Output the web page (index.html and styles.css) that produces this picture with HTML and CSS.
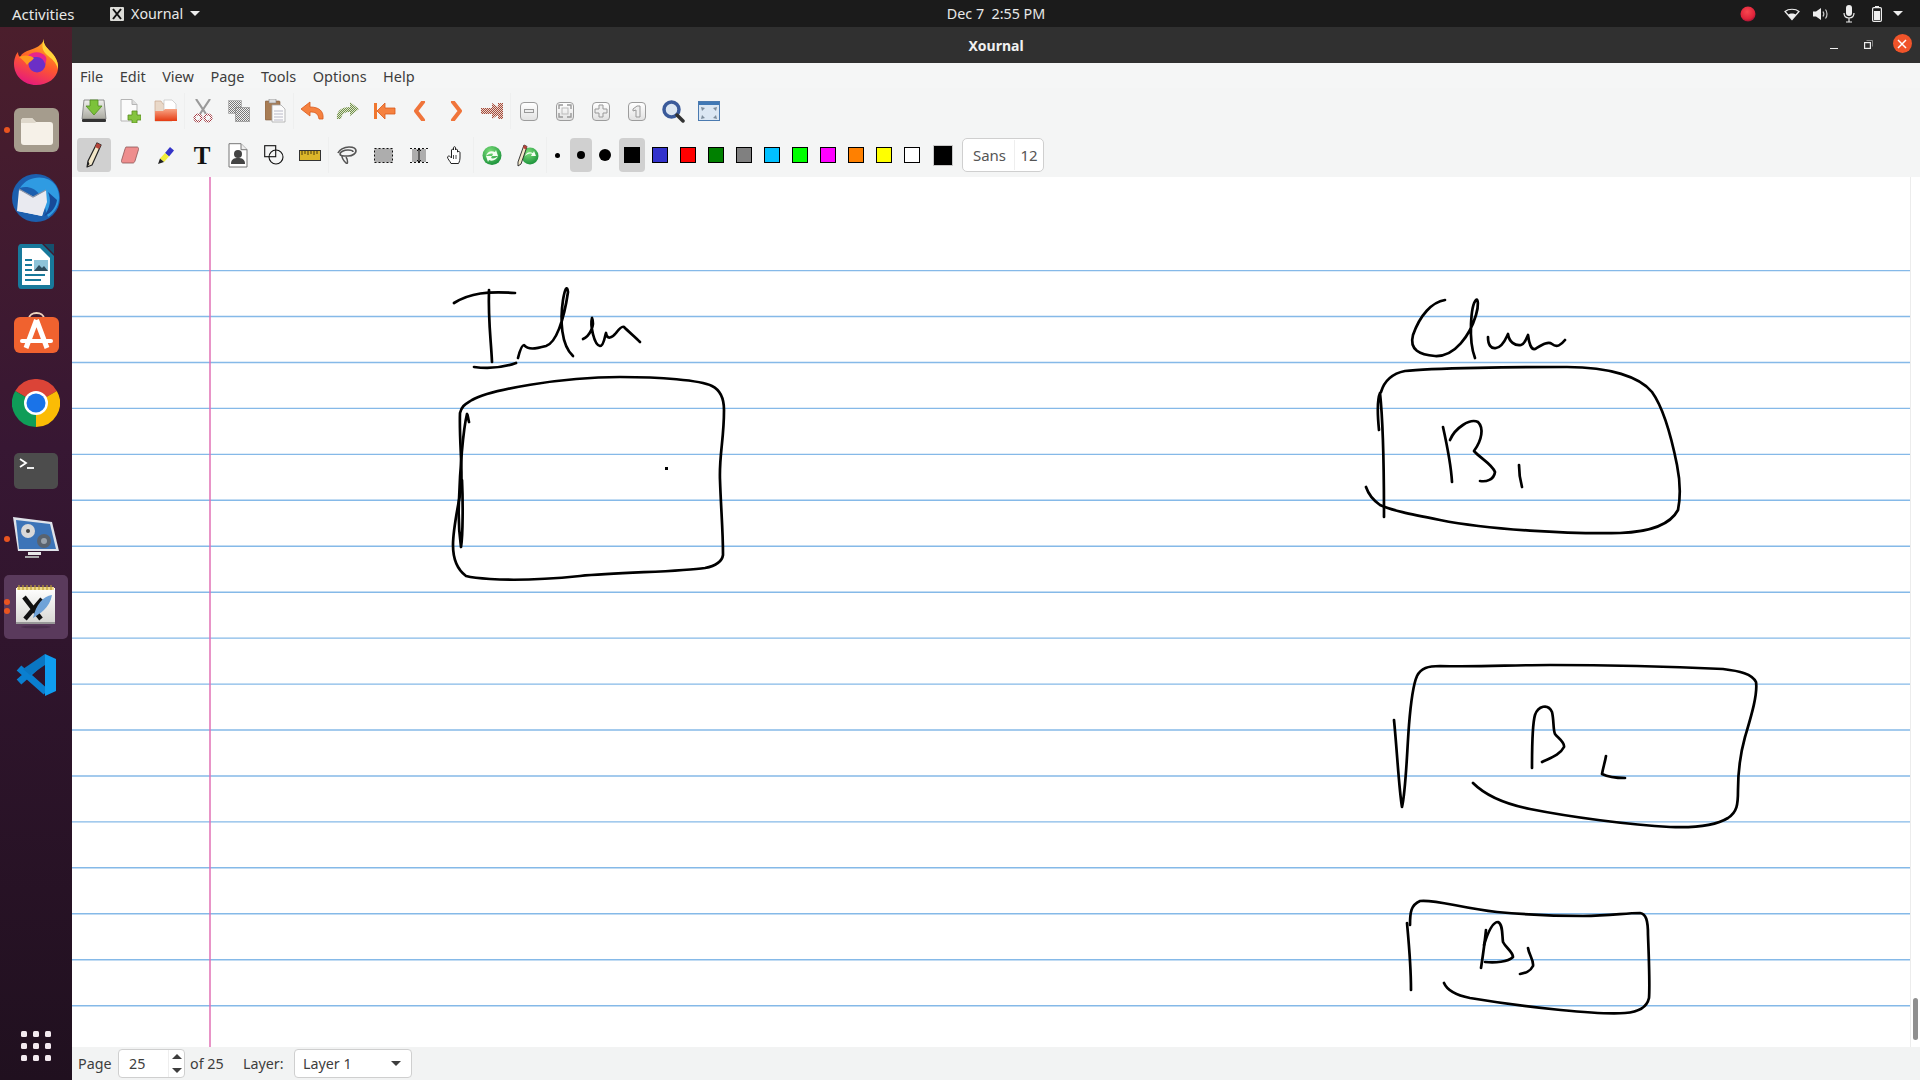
FILE: index.html

```html
<!DOCTYPE html>
<html lang="en">
<head>
<meta charset="UTF-8"><meta name="viewport" content="width=device-width, initial-scale=1">
<title>Xournal</title>
<link rel="stylesheet" href="styles.css">
</head>
<body>
  <header class="topbar">
    <div class="topbar-left">
      <span class="activities">Activities</span>
      <span class="appmenu">
        <svg width="14" height="14" viewBox="0 0 14 14"><rect width="14" height="14" rx="1" fill="#dcdcd8"/><path d="M3 2l8 10M11 2L3 12" stroke="#111" stroke-width="2"/></svg>
        Xournal
        <i class="caret caret-light"></i>
      </span>
    </div>
    <div class="clock">Dec 7&nbsp;&nbsp;2:55 PM</div>
    <div class="tray">
      <svg class="tray-rec" width="16" height="16" viewBox="0 0 16 16"><defs><radialGradient id="rec" cx=".45" cy=".35" r=".7"><stop offset="0" stop-color="#f8474f"/><stop offset=".7" stop-color="#e0233a"/><stop offset="1" stop-color="#8d1034"/></radialGradient></defs><circle cx="8" cy="8" r="7.5" fill="url(#rec)"/></svg>
      <svg class="tray-wifi" width="16" height="14" viewBox="0 0 16 14"><path d="M8 12.5L1 4.5C4.5 1.5 11.5 1.5 15 4.5Z" fill="#1a1a1a" stroke="#eee" stroke-width="1.2"/><path d="M8 12.5L4 7.5C6 6 10 6 12 7.5Z" fill="#eee"/></svg>
      <svg class="tray-vol" width="16" height="14" viewBox="0 0 16 14"><path d="M0 4.5h3L8 1v12L3 9.5H0Z" fill="#eee"/><path d="M10 4.5c1 1.5 1 3.5 0 5M12.5 2.5c2 2.5 2 6.500 0 9" stroke="#ccc" stroke-width="1.200" fill="none"/></svg>
      <svg class="tray-mic" width="12" height="18" viewBox="0 0 12 18"><rect x="3" y="0" width="6" height="11" rx="3" fill="#eee"/><path d="M1 8c0 3.500 2 5 5 5s5-1.500 5-5M6 13v4M3 17h6" stroke="#eee" stroke-width="1.200" fill="none"/></svg>
      <svg class="tray-bat" width="10" height="16" viewBox="0 0 10 16"><rect x=".6" y="1.600" width="8.800" height="13.800" rx="1.200" fill="none" stroke="#eee" stroke-width="1.200"/><rect x="3" y="0" width="4" height="1.600" fill="#eee"/><rect x="2" y="5" width="6" height="9" fill="#eee"/></svg>
      <i class="caret caret-light tray-caret"></i>
    </div>
  </header>

  <div class="desktop">
    <nav class="dock">
      <div class="dock-item">
        <svg width="46" height="46" viewBox="0 0 46 46">
          <defs>
            <linearGradient id="ffa" x1=".7" y1="0" x2=".3" y2="1"><stop offset="0" stop-color="#ffb21f"/><stop offset=".5" stop-color="#ff5a2c"/><stop offset="1" stop-color="#e5177f"/></linearGradient>
          </defs>
          <path d="M31 0c-1 5 2 8 7 13 6 6 7.500 12 7 17-1 9-10 16-22 16C11 46 1 37 1 25c0-5 2-10 4-12 0 3 1 4 2 5 2-4 6-6 10-7 5-2 12-4 14-11Z" fill="url(#ffa)"/>
          <path d="M31 0c-1 5 2 8 7 13 6 6 7.500 12 7 17-2-7-6-10-11-14C28 11 29 5 31 0Z" fill="#ffd43a"/>
          <circle cx="24" cy="25" r="8.500" fill="#6b2fc7"/>
          <path d="M15 17c4-5 14-5 18 1 1 2 0 5-1 7-1-4-4-7-8-7-3 0-6 0-9-1Z" fill="#e8258a"/>
          <path d="M6 18c5-2 10-2 15 1-2 3-5 4-7 7-2-3-5-6-8-8Z" fill="#ff9a1f"/>
        </svg>
      </div>
      <div class="dock-item has-dot">
        <i class="run-dot"></i>
        <svg width="45" height="44" viewBox="0 0 45 44"><rect width="45" height="44" rx="6" fill="#a59c8d"/><path d="M7 14c0-3 1-4 3-4h8l4 4h14c2 0 3 1 3 3v17c0 2-1 3-3 3H10c-2 0-3-1-3-3Z" fill="#f6f1e8"/><path d="M7 15c0-4 1-5 3-5h8l4 5Z" fill="#dfd8cb"/></svg>
      </div>
      <div class="dock-item">
        <svg width="48" height="48" viewBox="0 0 48 48"><circle cx="24" cy="24" r="24" fill="#1c5fae"/><path d="M8 14C16 1 36 0 44 12c6 10 3 24-8 31-3-8-4-16-8-22C22 13 14 12 8 14Z" fill="#2f9be2"/><path d="M7 16l26 14-3 12-25-5Z" fill="#f4f4f6"/><path d="M8 16l14 7 12-7 1 12-5 14-24-5Z" fill="#e9eaf0"/><path d="M7 15l14 8 13-7" fill="none" stroke="#8a93a6" stroke-width="1.200"/><path d="M36 18c3 7 3 15-4 24 8-3 12-9 13-16Z" fill="#174a98"/></svg>
      </div>
      <div class="dock-item">
        <svg width="36" height="45" viewBox="0 0 36 45"><path d="M3 0h21l12 12v29c0 2-1 4-3 4H3c-2 0-3-2-3-4V4c0-2 1-4 3-4Z" fill="#18799b"/><path d="M4 4h18l10 10v27H4Z" fill="#fff"/><path d="M26 0l10 10V0Z" fill="#15516e"/><path d="M7 16h7M7 21h7M7 26h7M7 31h20M7 36h16" stroke="#18799b" stroke-width="2"/><rect x="16" y="16" width="14" height="11" fill="#8ec4d9"/><path d="M16 27l5-6 3 3 2-2 4 5Z" fill="#2d4c5c"/></svg>
      </div>
      <div class="dock-item">
        <svg class="store-icon" width="45" height="41" viewBox="0 0 45 41"><path d="M15 7c0-8 15-8 15 0" fill="none" stroke="#f0d6c0" stroke-width="2"/><rect y="5" width="45" height="36" rx="6" fill="#f0622f"/><path d="M22.500 8L12 36M22.500 8L33 36" stroke="#fff" stroke-width="5"/><path d="M8 29h29" stroke="#fff" stroke-width="4" stroke-linecap="round"/></svg>
      </div>
      <div class="dock-item">
        <svg width="48" height="48" viewBox="0 0 48 48"><path d="M24 24L3.200 12A24 24 0 0 1 44.800 12Z" fill="#db4437"/><path d="M24 24L44.800 12A24 24 0 0 1 24 48Z" fill="#fbbc05"/><path d="M24 24L24 48A24 24 0 0 1 3.200 12Z" fill="#0f9d58"/><circle cx="24" cy="24" r="12" fill="#fff"/><circle cx="24" cy="24" r="9.500" fill="#1a73e8"/></svg>
      </div>
      <div class="dock-item">
        <svg width="44" height="36" viewBox="0 0 44 36"><rect width="44" height="36" rx="5" fill="#4c4c4c"/><path d="M6 6l6 4-6 4" fill="none" stroke="#fff" stroke-width="1.800"/><path d="M13 15h7" stroke="#fff" stroke-width="1.800"/></svg>
      </div>
      <div class="dock-item has-dot">
        <i class="run-dot"></i>
        <svg width="46" height="44" viewBox="0 0 46 44"><path d="M0 0l39 5 7 29-41 0Z" fill="#dfe3ea"/><path d="M3 3l34 4 6 25-37 0Z" fill="#3c74b8"/><circle cx="15" cy="14" r="7" fill="#d9d9d9"/><circle cx="15" cy="14" r="2" fill="#444"/><circle cx="31" cy="24" r="7" fill="#59636f"/><circle cx="31" cy="24" r="3" fill="#9aa3ad"/><rect x="15" y="35" width="13" height="3" fill="#e8e8e8"/><rect x="12" y="39" width="14" height="2" fill="#aaa"/></svg>
      </div>
      <div class="dock-item dock-active has-dot2">
        <i class="run-dot"></i><i class="run-dot run-dot2"></i>
        <svg width="40" height="44" viewBox="0 0 40 44"><defs><linearGradient id="xpad" x1="0" y1="0" x2="0" y2="1"><stop offset="0" stop-color="#fff"/><stop offset="1" stop-color="#d6d6d2"/></linearGradient></defs><rect y="3" width="39" height="36" fill="url(#xpad)"/><rect x="1" y="2" width="37" height="3" fill="#efd98a"/><path d="M3 0v5M7 0v5M11 0v5M15 0v5M19 0v5M23 0v5M27 0v5M31 0v5M35 0v5" stroke="#b89a34" stroke-width="1.200"/><rect y="37" width="39" height="2" fill="#999"/><path d="M8 12L25 34M26 14L9 34" stroke="#111" stroke-width="4.500"/><path d="M36 10c-9 1-16 10-19 23 6-4 17-10 19-23Z" fill="#6fa3d8"/><ellipse cx="20" cy="42" rx="15" ry="1.500" fill="#4a2f4d"/></svg>
      </div>
      <div class="dock-item">
        <svg width="42" height="42" viewBox="0 0 42 42"><path d="M31 4L4 28M4 14l27 24" stroke="#0a7fd0" stroke-width="7"/><path d="M30 0l11 5v32l-11 5Z" fill="#0f9df0"/><path d="M30 0v11L15 21 8 15Z" fill="#0a76c2"/></svg>
      </div>
      <div class="dock-grid">
        <i></i><i></i><i></i><i></i><i></i><i></i><i></i><i></i><i></i>
      </div>
    </nav>

    <main class="window">
      <div class="titlebar">
        <span></span>
        <span class="wintitle">Xournal</span>
        <div class="winbtns">
          <span class="winbtn"><i class="win-min"></i></span>
          <span class="winbtn"><svg class="win-restore" width="9" height="9" viewBox="0 0 9 9"><rect x=".6" y="2.600" width="5.800" height="5.800" fill="none" stroke="#eee" stroke-width="1.200"/><path d="M2.500 .5h6v6" fill="none" stroke="#999" stroke-width=".8"/></svg></span>
          <span class="winbtn"><span class="win-close"><svg width="10" height="10" viewBox="0 0 10 10"><path d="M1 1l8 8M9 1L1 9" stroke="#fff" stroke-width="1.500"/></svg></span></span>
        </div>
      </div>

      <div class="menubar">
        <span>File</span><span>Edit</span><span>View</span><span>Page</span><span>Tools</span><span>Options</span><span>Help</span>
      </div>

      <div class="toolbar toolbar-top">
        <span class="tool"><svg width="26" height="26" viewBox="0 0 26 26"><defs><linearGradient id="drv" x1="0" y1="0" x2="0" y2="1"><stop offset="0" stop-color="#f1f1ee"/><stop offset="1" stop-color="#a9a99f"/></linearGradient></defs><path d="M3 2h20l2 19H1Z" fill="url(#drv)" stroke="#777" stroke-width=".8"/><rect x="1" y="21" width="24" height="3" rx="1" fill="#333"/><path d="M9 2h8v6h4l-8 9-8-9h4Z" fill="#7cc23a" stroke="#4f8c1e" stroke-width=".8"/></svg></span>
        <span class="tool"><svg width="22" height="24" viewBox="0 0 22 24"><path d="M2 .5h11l5 5V22H2Z" fill="#fbfbfb" stroke="#b5b5b5"/><path d="M13 .5v5h5" fill="#ddd" stroke="#b5b5b5"/><path d="M13 12h5v4h4v5h-4v3h-5v-3H9v-5h4Z" fill="#85c440" stroke="#5b8d22" stroke-width=".8"/></svg></span>
        <span class="tool"><svg width="24" height="24" viewBox="0 0 24 24"><defs><linearGradient id="opn" x1="0" y1="0" x2="0" y2="1"><stop offset="0" stop-color="#f8a585"/><stop offset="1" stop-color="#e53b12"/></linearGradient></defs><path d="M1 2h6l2 3h7l2 3v14H1Z" fill="#e9d8c8" stroke="#c9a78e" stroke-width=".7"/><path d="M10 1h8l4 4v7H10Z" fill="#fff" stroke="#bbb" stroke-width=".6"/><path d="M1 12h8l2-2h12v12H1Z" fill="url(#opn)"/></svg></span>
        <i class="sep"></i>
        <span class="tool"><svg width="20" height="24" viewBox="0 0 20 24"><defs><pattern id="dithr" width="2" height="2" patternUnits="userSpaceOnUse"><rect width="2" height="2" fill="#fff"/><rect width="1" height="1" fill="#a23c44"/><rect x="1" y="1" width="1" height="1" fill="#a23c44"/></pattern></defs><path d="M3 0l10 15M17 0L7 15" stroke="#9a9a9a" stroke-width="2.200"/><circle cx="5" cy="19" r="3.500" fill="none" stroke="url(#dithr)" stroke-width="2.200"/><circle cx="15" cy="19" r="3.500" fill="none" stroke="url(#dithr)" stroke-width="2.200"/></svg></span>
        <span class="tool"><svg width="22" height="22" viewBox="0 0 22 22"><defs><pattern id="dithg" width="2" height="2" patternUnits="userSpaceOnUse"><rect width="2" height="2" fill="#f0f0f0"/><rect width="1" height="1" fill="#777"/><rect x="1" y="1" width="1" height="1" fill="#777"/></pattern></defs><rect x=".5" y=".5" width="13" height="13" fill="url(#dithg)" stroke="#999" stroke-dasharray="1 1"/><rect x="7.500" y="7.500" width="14" height="14" fill="url(#dithg)" stroke="#777" stroke-dasharray="1 1"/></svg></span>
        <span class="tool"><svg width="21" height="24" viewBox="0 0 21 24"><rect y="2" width="15" height="19" rx="1" fill="#a87d55" stroke="#7f5c3c" stroke-width=".6"/><rect x="4" y="0" width="7" height="4" fill="#ddd" stroke="#888" stroke-width=".6"/><path d="M7 6h9l4 4v13H7Z" fill="#fbfbfb" stroke="#aaa" stroke-width=".8"/><path d="M9 12h9M9 15h9M9 18h9M9 21h9" stroke="#aab" stroke-width=".8"/></svg></span>
        <i class="sep"></i>
        <span class="tool"><svg width="24" height="20" viewBox="0 0 24 20"><path d="M10 1L1 8l9 7v-4c5 0 8 1 9 7h4c1-8-4-12-13-12Z" fill="#f5813f" stroke="#d9581a" stroke-width=".8" stroke-linejoin="round"/></svg></span>
        <span class="tool"><svg width="24" height="20" viewBox="0 0 24 20"><defs><pattern id="dithv" width="2" height="2" patternUnits="userSpaceOnUse"><rect width="2" height="2" fill="#dfe8cd"/><rect width="1" height="1" fill="#6f8d4a"/><rect x="1" y="1" width="1" height="1" fill="#6f8d4a"/></pattern></defs><path d="M14 1l9 7-9 7v-4c-5 0-8 1-9 7H1C0 10 5 6 14 6Z" fill="url(#dithv)"/></svg></span>
        <span class="tool"><svg width="24" height="20" viewBox="0 0 24 20"><rect x="2" y="2" width="3" height="16" fill="#f0772f"/><path d="M13 2L5 10l8 8v-5h10V7H13Z" fill="#f5813f" stroke="#d9581a" stroke-width=".8" stroke-linejoin="round"/></svg></span>
        <span class="tool"><svg width="14" height="20" viewBox="0 0 14 20"><path d="M10 1L3 10l7 9" fill="none" stroke="#f0743a" stroke-width="4" stroke-linecap="round" stroke-linejoin="round"/></svg></span>
        <span class="tool"><svg width="14" height="20" viewBox="0 0 14 20"><path d="M4 1l7 9-7 9" fill="none" stroke="#f0743a" stroke-width="4" stroke-linecap="round" stroke-linejoin="round"/></svg></span>
        <span class="tool"><svg width="24" height="20" viewBox="0 0 24 20"><defs><pattern id="dithb" width="2" height="2" patternUnits="userSpaceOnUse"><rect width="2" height="2" fill="#ecd6cc"/><rect width="1" height="1" fill="#a24a3c"/><rect x="1" y="1" width="1" height="1" fill="#a24a3c"/></pattern></defs><path d="M1 7h11V2l6 4V2h5v16h-5v-4l-6 4v-5H1Z" fill="url(#dithb)"/></svg></span>
        <i class="sep"></i>
        <span class="tool"><span class="zoombtn"><svg width="12" height="12" viewBox="0 0 12 12"><rect x="1.500" y="4.500" width="9" height="3" fill="#eee" stroke="#999"/></svg></span></span>
        <span class="tool"><span class="zoombtn"><svg width="14" height="14" viewBox="0 0 14 14"><path d="M1 5V1h4M9 1h4v4M13 9v4H9M5 13H1V9" fill="none" stroke="#999" stroke-width="1.400"/><rect x="4" y="4" width="6" height="6" fill="none" stroke="#bbb"/></svg></span></span>
        <span class="tool"><span class="zoombtn"><svg width="14" height="14" viewBox="0 0 14 14"><path d="M5 1h4v4h4v4H9v4H5V9H1V5h4Z" fill="#eee" stroke="#999"/></svg></span></span>
        <span class="tool"><span class="zoombtn"><svg width="14" height="14" viewBox="0 0 14 14"><path d="M3 5l4-3h3v11H6V6L3 7Z" fill="#eee" stroke="#999"/></svg></span></span>
        <span class="tool"><svg width="23" height="23" viewBox="0 0 23 23"><circle cx="9.500" cy="9.500" r="7.500" fill="#dce6f2" stroke="#3a5a9a" stroke-width="3.500"/><path d="M15 15l6 6" stroke="#333" stroke-width="3.500" stroke-linecap="round"/></svg></span>
        <span class="tool"><svg width="22" height="20" viewBox="0 0 22 20"><rect x=".5" y=".5" width="21" height="19" fill="#dbe7f3" stroke="#4a7ab0"/><rect x="1" y="1" width="20" height="3" fill="#3f78b5"/><path d="M3 6l4 1-3 3ZM19 6l-4 1 3 3ZM3 18l4-1-3-3ZM19 18l-4-1 3-3Z" fill="#7d8d9c"/></svg></span>
      </div>

      <div class="toolbar toolbar-bottom">
        <span class="tool tool-on"><svg width="18" height="26" viewBox="0 0 18 26"><path d="M12 1l4 2-9 20-5 2 1-6Z" fill="#f2e7c8" stroke="#222" stroke-width="1.200" stroke-linejoin="round"/><path d="M12 1l4 2-2 4-4-2Z" fill="#b5443a"/><path d="M3 19l1.500 3L2 25Z" fill="#222"/></svg></span>
        <span class="tool"><svg width="18" height="18" viewBox="0 0 18 18"><path d="M5 1h11c1 0 2 1 1.500 2.500L14 15c-.5 1-1 2-2 2H2c-1 0-2-1-1.500-2.500L4 3c.5-1 .5-2 1-2Z" fill="#ee8e8e" stroke="#8c5555" stroke-width=".8"/></svg></span>
        <span class="tool"><svg width="18" height="18" viewBox="0 0 18 18"><path d="M13 1l4 3.500-5 6-4-3.500Z" fill="#3434c8"/><path d="M8 7l4 3.500-5 5.500-4-3.500Z" fill="#f0ee3a"/><path d="M3 12.500l4 3.500-6 2Z" fill="#222"/></svg></span>
        <span class="tool"><span class="t-icon">T</span></span>
        <span class="tool"><svg width="20" height="25" viewBox="0 0 20 25"><path d="M1 .7h12l6 6V24H1Z" fill="#fff" stroke="#777"/><path d="M13 .7v6h6" fill="#eee" stroke="#777"/><circle cx="10" cy="11" r="4" fill="#444"/><path d="M3 21c0-5 3-6 7-6s7 1 7 6Z" fill="#444"/></svg></span>
        <span class="tool"><svg width="20" height="20" viewBox="0 0 20 20"><rect x=".7" y=".7" width="11" height="11" fill="none" stroke="#111" stroke-width="1.100"/><circle cx="12" cy="12" r="7" fill="none" stroke="#111" stroke-width="1.100"/></svg></span>
        <span class="tool"><svg width="22" height="11" viewBox="0 0 22 11"><rect x=".5" y=".5" width="21" height="10" fill="#dcb62a" stroke="#333"/><path d="M3 1v4M6 1v3M9 1v4M12 1v3M15 1v4M18 1v3" stroke="#4b3a0a"/></svg></span>
        <i class="sep"></i>
        <span class="tool"><svg width="20" height="18" viewBox="0 0 20 18"><path d="M1 7c1-3 6-6 11-6s7 2 7 4-3 5-8 5-8 0-8-2 4-4 8-4 5 1 5 2" fill="none" stroke="#555" stroke-width="1.700"/><path d="M5 10c0 3 2 5 4 7s2-3 0-6" fill="none" stroke="#555" stroke-width="1.500"/></svg></span>
        <span class="tool"><svg width="19" height="15" viewBox="0 0 19 15"><rect x=".5" y=".5" width="18" height="14" fill="#adadad" stroke="#111" stroke-dasharray="2 2"/></svg></span>
        <span class="tool"><svg width="18" height="15" viewBox="0 0 18 15"><rect x="2" y="1" width="14" height="13" fill="#adadad"/><path d="M0 .5h18M0 14.500h18" stroke="#111" stroke-dasharray="2 2"/><path d="M9 1v13M7 3l2-2 2 2M7 12l2 2 2-2" fill="none" stroke="#111"/></svg></span>
        <span class="tool"><svg width="16" height="18" viewBox="0 0 16 18"><path d="M4 17.500C3 15 .5 13 .5 11c1-2 3-.5 4 1V4C4.500 3 6.500 3 6.500 4V1.500C6.500.5 8.500.5 8.500 1.500V4C8.500 3 10.500 3 10.500 4V6C11 5 13 5.500 13 6.500V11c0 3-.5 4.500-1.500 6.500Z" fill="#fff" stroke="#222" stroke-linejoin="round"/><path d="M6.500 9v4M9 9v4" stroke="#222" stroke-width=".8"/></svg></span>
        <i class="sep"></i>
        <span class="tool"><svg width="20" height="21" viewBox="0 0 20 21"><defs><radialGradient id="grn" cx=".4" cy=".3" r=".8"><stop offset="0" stop-color="#7ddf7a"/><stop offset="1" stop-color="#108a34"/></radialGradient></defs><circle cx="10" cy="10.500" r="9.500" fill="url(#grn)"/><path d="M4 11c1-4 5-6 9-4l1-2 2 6-6 0 1-2c-2-1-5 0-7 2ZM16 11c-1 3-5 6-9 4l-1 2-2-6 6 0-1 2c2 1 5 0 7-2Z" fill="#f4fff2"/></svg></span>
        <span class="tool"><svg width="22" height="23" viewBox="0 0 22 23"><circle cx="13" cy="12" r="8.500" fill="url(#grn)"/><path d="M8 12c1-3 4-5 8-3l1-2 2 5-5 0 1-2c-2-1-5 0-7 2Z" fill="#f4fff2"/><path d="M7 1l3 1.500L4 20l-3 2 0-4Z" fill="#f2e7c8" stroke="#222" stroke-width=".9" stroke-linejoin="round"/><path d="M7 1l3 1.500-1 3L6 4Z" fill="#b5443a"/></svg></span>
        <i class="sep"></i>
        <span class="thick thick-s"><i class="dot dot-s"></i></span>
        <span class="thick thick-on"><i class="dot dot-m"></i></span>
        <span class="thick"><i class="dot dot-l"></i></span>
        <span class="colorpick"><i class="swatch c-black"></i></span>
        <span class="swatchbox"><i class="swatch c-blue"></i></span>
        <span class="swatchbox"><i class="swatch c-red"></i></span>
        <span class="swatchbox"><i class="swatch c-green"></i></span>
        <span class="swatchbox"><i class="swatch c-gray"></i></span>
        <span class="swatchbox"><i class="swatch c-cyan"></i></span>
        <span class="swatchbox"><i class="swatch c-lime"></i></span>
        <span class="swatchbox"><i class="swatch c-magenta"></i></span>
        <span class="swatchbox"><i class="swatch c-orange"></i></span>
        <span class="swatchbox"><i class="swatch c-yellow"></i></span>
        <span class="swatchbox"><i class="swatch c-white"></i></span>
        <i class="curcolor"></i>
        <span class="fontbtn"><span class="fontname">Sans</span><span class="fontsize">12</span></span>
      </div>

      <div class="canvas-row">
        <div class="canvas">
          <svg class="page" width="1838" height="870" viewBox="72 177 1838 870">
            <g class="rules">
              <path d="M72 270.600H1910M72 316.500H1910M72 362.500H1910M72 408.400H1910M72 454.400H1910M72 500.300H1910M72 546.200H1910M72 592.200H1910M72 638.100H1910M72 684.100H1910M72 730H1910M72 776H1910M72 821.900H1910M72 867.800H1910M72 913.800H1910M72 959.700H1910M72 1005.700H1910"/>
            </g>
            <path class="margin-line" d="M210 177V1047"/>
            <g class="ink">
              <!-- Inter -->
              <path d="M454 303C470 293 488 291 515 293"/>
              <path d="M489 290C488 320 491 340 492 362"/>
              <path d="M474 367C490 369 505 367 516 363"/>
              <path d="M518 358C520 350 522 345 524 345C528 350 535 349 546 346C556 343 564 320 568 292C567 285 565 288 563 300C560 320 561 345 573 356"/>
              <path d="M583 339C590 336 595 325 592 318C590 325 594 345 600 346C604 346 605 335 606 333C607 340 612 338 616 333C619 329 622 326 624 327C629 332 635 337 640 342"/>
              <path d="M460 413C462 405 466 404 472 400C490 390 560 377 620 377C660 377 700 380 712 386C722 391 724 400 724 410C724 440 719 455 720 480C721 510 723 530 723 555C722 562 715 566 705 568C680 572 620 572 580 576C550 579 520 581 490 579C475 578 470 577 466 576C458 570 453 560 453 545C453 530 457 510 461 490C463 470 459 440 460 413"/>
              <path d="M469 422C468 418 468 415 467 414C463 430 460 470 459 500C458 520 460 540 461 547C463 535 463 500 462 480"/>
              <rect class="ink-dot" x="665" y="467" width="3" height="3"/>
              <!-- Class -->
              <path d="M1445 300C1432 302 1420 315 1413 335C1409 350 1420 355 1435 356C1455 357 1470 335 1476 315C1479 305 1478 298 1476 300C1471 305 1468 340 1475 358"/>
              <path d="M1488 337C1488 345 1491 349 1496 348C1503 347 1506 338 1508 334C1509 342 1515 346 1521 345C1525 344 1527 337 1528 335C1529 343 1531 350 1535 349C1542 345 1548 341 1552 344C1557 348 1561 345 1565 340"/>
              <path d="M1381 392C1384 382 1390 374 1405 371C1430 368 1520 367 1567 367C1610 367 1640 377 1652 392C1665 410 1672 440 1677 465C1680 480 1681 495 1678 510C1670 525 1650 532 1620 533C1570 534 1490 530 1440 520C1410 514 1390 510 1380 505C1373 500 1368 493 1366 487"/>
              <path d="M1384 517C1384 480 1384 430 1380 393C1377 400 1378 420 1379 430"/>
              <path d="M1443 427C1447 445 1451 465 1452 482"/>
              <path d="M1450 440C1455 428 1470 418 1478 422C1484 428 1482 440 1474 451C1480 458 1492 464 1495 472C1494 480 1486 482 1480 481"/>
              <path d="M1519 465C1519 472 1520 480 1522 487"/>
              <!-- B2 -->
              <path d="M1394 720C1397 750 1399 790 1402 807C1406 790 1407 750 1409 725C1411 700 1413 685 1417 676C1421 668 1428 666 1440 666C1480 667 1510 665 1550 665C1610 665 1680 667 1723 669C1740 671 1752 674 1756 682C1758 695 1750 720 1745 737C1740 755 1738 770 1738 790C1738 805 1737 812 1728 818C1715 826 1695 828 1670 827C1630 825 1570 817 1530 809C1505 804 1485 795 1473 783"/>
              <path d="M1532 768C1532 745 1532 725 1535 715C1538 706 1548 703 1552 712C1554 720 1553 730 1555 734C1558 738 1565 742 1564 747C1560 755 1550 758 1542 762"/>
              <path d="M1606 756C1605 762 1603 768 1602 774C1608 777 1616 778 1625 778"/>
              <!-- B3 -->
              <path d="M1411 990C1411 965 1409 945 1407 923"/>
              <path d="M1410 925C1410 912 1411 905 1420 901C1435 899 1460 908 1497 912C1530 915 1560 916 1583 916C1610 916 1625 913 1640 913C1646 914 1648 920 1648 935C1649 960 1650 985 1649 998C1647 1007 1640 1012 1625 1013C1600 1015 1530 1008 1470 998C1455 995 1447 990 1444 983"/>
              <path d="M1481 968C1483 955 1485 940 1486 930"/>
              <path d="M1484 945C1488 932 1493 922 1498 922C1503 924 1502 935 1503 942C1506 948 1513 952 1513 957C1508 962 1495 963 1485 962"/>
              <path d="M1528 948C1529 955 1534 960 1533 966C1530 972 1525 973 1520 974"/>
            </g>
          </svg>
        </div>
        <div class="gutter"><i class="thumb"></i></div>
      </div>

      <div class="statusbar">
        <span class="lbl-page">Page</span>
        <span class="spin">
          <span class="spin-val">25</span>
          <span class="spin-arrows"><i class="caret caret-up"></i><i class="caret caret-dark"></i></span>
        </span>
        <span class="lbl-of">of 25</span>
        <span class="lbl-layer">Layer:</span>
        <span class="select"><span>Layer 1</span><i class="caret caret-dark"></i></span>
      </div>
    </main>
  </div>
</body>
</html>
```

FILE: styles.css

```css
*{box-sizing:border-box}
html,body{margin:0;height:100%}
body{width:1920px;height:1080px;overflow:hidden;font-family:"Noto Sans",sans-serif;font-size:14.3px;color:#3d3d3d;display:flex;flex-direction:column}
i{display:block;font-style:normal}
svg{display:block}

.caret{width:0;height:0;border-left:5px solid transparent;border-right:5px solid transparent}
.caret-light{border-top:5px solid #eee}
.caret-dark{border-top:5px solid #3d3d3d}
.caret-up{border-bottom:5px solid #3d3d3d}

/* top bar */
.topbar{height:27px;background:#1b1b1b;color:#e8e8e8;display:grid;grid-template-columns:946px 100px 1fr;align-items:center;flex:none;padding-bottom:1px}
.topbar-left{display:flex;align-items:center}
.activities{margin-left:12px;width:98px;font-size:15px}
.appmenu{display:flex;align-items:center;gap:7px}
.clock{white-space:nowrap;text-align:center}
.tray{display:flex;align-items:center;height:27px;padding-left:694px}
.tray-wifi{margin-left:28px}
.tray-vol{margin-left:13px}
.tray-mic{margin-left:14px}
.tray-bat{margin-left:17px}
.tray-caret{margin-left:11px}

.desktop{flex:1;display:flex;min-height:0}

/* dock */
.dock{width:72px;flex:none;background:linear-gradient(#4b1e2c,#371733 40%,#20101f);display:flex;flex-direction:column;align-items:center;padding-top:1px}
.dock-item{height:68.1px;width:64px;flex:none;display:flex;align-items:center;justify-content:center;position:relative}
.dock-active{background:#5a3a5c;border-radius:5px;height:64.1px;margin:2px 0}
.store-icon{margin-bottom:4px}
.run-dot{position:absolute;left:0;top:31px;width:6px;height:6px;border-radius:50%;background:#e95420}
.has-dot2 .run-dot{top:24px}
.has-dot2 .run-dot2{top:33px}
.dock-grid{margin-top:auto;margin-bottom:19px;display:grid;grid-template-columns:repeat(3,6px);grid-auto-rows:6px;gap:6px}
.dock-grid i{background:#f3eaf0;border-radius:1.5px}

/* window */
.window{flex:1;display:flex;flex-direction:column;min-width:0;background:#f4f5f5}
.titlebar{height:36px;flex:none;background:#303030;color:#f0f0f0;display:grid;grid-template-columns:1fr auto 1fr;align-items:center}
.wintitle{font-weight:700;font-size:14px}
.winbtns{display:flex;justify-content:flex-end;padding-right:1px}
.winbtn{width:34px;height:36px;display:flex;align-items:center;justify-content:center}
.win-min{width:8px;height:1px;background:#eee;margin-top:6px}
.win-restore{margin-bottom:2px}
.win-close{width:19px;height:19px;border-radius:50%;background:#f0542a;display:flex;align-items:center;justify-content:center;margin-bottom:3px}

.menubar{height:25px;flex:none;display:flex;align-items:center;background:#f5f6f6;font-size:14.5px}
.menubar span{padding:0 8.5px 0 8px}

.toolbar{display:flex;align-items:center;padding-left:4px;flex:none}
.toolbar-top{height:46px}
.toolbar-bottom{height:43px;padding-bottom:1px}
.tool{width:36px;height:34px;flex:none;display:flex;align-items:center;justify-content:center}
.tool-on{background:#d0d0d0;border-radius:4px;background-clip:content-box;padding:0 1px}
.sep{width:1px;height:36px;background:#eeefef;flex:none}
.zoombtn{width:18px;height:19px;border:1px solid #9c9c9c;border-radius:4px;background:linear-gradient(#fff,#e2e2e2);display:flex;align-items:center;justify-content:center}
.t-icon{font-family:"Liberation Serif",serif;font-weight:700;font-size:25px;line-height:1;color:#111}

.thick{width:24px;height:34px;flex:none;display:flex;align-items:center;justify-content:center}
.thick-s{width:20px}
.thick-on{background:#d0d0d0;border-radius:4px;width:22px;margin:0 1px 0 3px}
.dot{border-radius:50%;background:#000}
.dot-s{width:5px;height:5px}
.dot-m{width:8px;height:8px}
.dot-l{width:12px;height:12px}
.colorpick{width:26px;height:34px;flex:none;margin-left:2px;margin-right:1px;background:#d0d0d0;border-radius:4px;display:flex;align-items:center;justify-content:center}
.swatchbox{width:28px;height:34px;flex:none;display:flex;align-items:center;justify-content:center}
.swatch{width:16px;height:16px;border:1px solid #000}
.c-black{background:#000}
.c-blue{background:#3333cc}
.c-red{background:#f00}
.c-green{background:#008000}
.c-gray{background:#808080}
.c-cyan{background:#00c0ff}
.c-lime{background:#0f0}
.c-magenta{background:#f0f}
.c-orange{background:#ff8000}
.c-yellow{background:#ff0}
.c-white{background:#fff}
.curcolor{width:20px;height:21px;flex:none;margin-left:7px;background:#000;border:1px solid #c8c8c8}
.fontbtn{width:82px;height:34px;flex:none;margin-left:9px;background:#fff;border:1px solid #cfcfcf;border-radius:5px;display:flex;align-items:center;font-size:15px;color:#555}
.fontname{width:52px;text-align:center;border-right:1px solid #eee;line-height:30px;padding-left:2px}
.fontsize{flex:1;text-align:center}

/* page */
.canvas-row{flex:1;display:flex;min-height:0;background:#fff}
.canvas{width:1838px;flex:none;background:#fff}
.rules path{stroke:#85b9e8;stroke-width:1.400;fill:none}
.margin-line{stroke:#e070b5;stroke-width:1.500;fill:none}
.ink path{fill:none;stroke:#000;stroke-width:2.700;stroke-linecap:round;stroke-linejoin:round}
.ink-dot{fill:#000}
.gutter{flex:1;border-left:1px solid #ececec;display:flex;flex-direction:column;justify-content:flex-end;align-items:center;padding-bottom:7px;padding-right:1px}
.thumb{width:5px;height:42px;background:#8f8f8f;border-radius:3px}

/* status bar */
.statusbar{height:33px;flex:none;background:#f2f3f3;display:flex;align-items:center}
.lbl-page{margin-left:6px;width:40px}
.spin{width:67px;height:29px;background:#fff;border:1px solid #cfcfcf;border-radius:4px;display:flex;align-items:center}
.spin-val{flex:1;padding-left:10px}
.spin-arrows{width:16px;height:27px;border-left:1px solid #eee;display:flex;flex-direction:column;align-items:center;justify-content:center;gap:9px}
.lbl-of{margin-left:5px;width:53px}
.lbl-layer{width:51px}
.select{width:118px;height:29px;background:#fff;border:1px solid #cfcfcf;border-radius:4px;display:flex;align-items:center;justify-content:space-between;padding:0 10px 0 8px}
```
